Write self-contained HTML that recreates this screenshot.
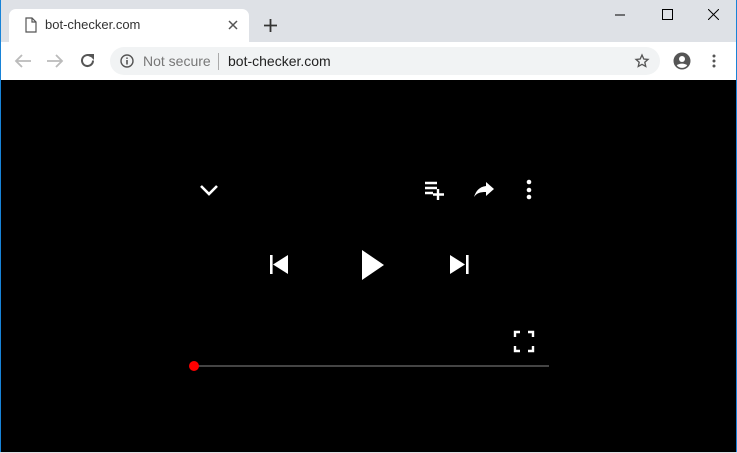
<!DOCTYPE html>
<html><head><style>
body{margin:0;width:737px;height:453px;overflow:hidden;background:#dee1e6;font-family:"Liberation Sans",sans-serif;position:relative}
.abs{position:absolute}
</style></head><body>
<div class="abs" style="left:0;top:0;width:735px;height:451px;border:1px solid #1883d7;border-top:none"></div>
<div class="abs" style="left:1px;top:0;width:735px;height:42px;background:#dee1e6"></div>
<div class="abs" style="left:9px;top:9px;width:240px;height:34px;background:#fff;border-radius:7px 7px 0 0"></div>
<svg class="abs" style="left:24px;top:17px" width="14" height="16" viewBox="0 0 14 16"><path d="M2 1h6l4 4v10H2z M8 1v4h4" fill="none" stroke="#555" stroke-width="1.2"/></svg>
<div class="abs" style="left:45px;top:17px;font-size:13px;color:#333">bot-checker.com</div>
<svg class="abs" style="left:228px;top:20px" width="10" height="10"><path d="M1 1L9 9M9 1L1 9" stroke="#555" stroke-width="1.5"/></svg>
<svg class="abs" style="left:264px;top:19px" width="13" height="13"><path d="M6.5 0v13M0 6.5h13" stroke="#333" stroke-width="1.8"/></svg>
<svg class="abs" style="left:615px;top:14px" width="10" height="2"><path d="M0 1h10" stroke="#000"/></svg>
<svg class="abs" style="left:662px;top:9px" width="11" height="11"><rect x=".5" y=".5" width="10" height="10" fill="none" stroke="#000"/></svg>
<svg class="abs" style="left:708px;top:9px" width="11" height="11"><path d="M0 0L11 11M11 0L0 11" stroke="#000"/></svg>
<div class="abs" style="left:1px;top:42px;width:735px;height:38px;background:#fff"></div>
<svg class="abs" style="left:14px;top:53px" width="18" height="16"><path d="M17 8H2M8 2L2 8l6 6" fill="none" stroke="#bbb" stroke-width="1.8"/></svg>
<svg class="abs" style="left:46px;top:53px" width="18" height="16"><path d="M1 8h15M10 2l6 6-6 6" fill="none" stroke="#bbb" stroke-width="1.8"/></svg>
<svg class="abs" style="left:79px;top:52px" width="17" height="17" viewBox="0 0 17 17"><path d="M14 8.5A5.5 5.5 0 1 1 12 4.3" fill="none" stroke="#555" stroke-width="2"/><path d="M9 2h6v6z" fill="#555"/></svg>
<div class="abs" style="left:110px;top:47px;width:550px;height:28px;background:#f1f3f4;border-radius:14px"></div>
<svg class="abs" style="left:120px;top:54px" width="14" height="14"><circle cx="7" cy="7" r="6" fill="none" stroke="#555" stroke-width="1.4"/><path d="M7 6v4.5M7 3.5v1.4" stroke="#555" stroke-width="1.6"/></svg>
<div class="abs" style="left:143px;top:53px;font-size:14px;color:#777">Not secure</div>
<div class="abs" style="left:218px;top:53px;width:1px;height:17px;background:#aaa"></div>
<div class="abs" style="left:228px;top:53px;font-size:14px;color:#222">bot-checker.com</div>
<svg class="abs" style="left:634px;top:53px" width="16" height="16" viewBox="0 0 24 24"><path d="M12 3l2.7 6 6.3.6-4.8 4.3 1.4 6.3L12 17l-5.6 3.2 1.4-6.3L3 9.6 9.3 9z" fill="none" stroke="#555" stroke-width="2"/></svg>
<svg class="abs" style="left:673px;top:52px" width="18" height="18" viewBox="0 0 18 18"><circle cx="9" cy="9" r="8.5" fill="#555"/><circle cx="9" cy="7" r="3" fill="#fff"/><path d="M3.8 13.5c2-2.5 8.4-2.5 10.4 0A7 7 0 0 1 3.8 13.5z" fill="#fff"/></svg>
<svg class="abs" style="left:712px;top:54px" width="4" height="14"><circle cx="2" cy="2" r="1.5" fill="#555"/><circle cx="2" cy="7" r="1.5" fill="#555"/><circle cx="2" cy="12" r="1.5" fill="#555"/></svg>
<div class="abs" style="left:1px;top:80px;width:735px;height:372px;background:#000"></div>
<svg class="abs" style="left:0;top:0" width="737" height="453">
<path d="M201 186l8 8 8-8" fill="none" stroke="#fff" stroke-width="2.6"/>
<path d="M425 183h12M425 188h12M425 193h8M438 189v11M433 194.5h11" stroke="#fff" stroke-width="2.4"/>
<path d="M494 189l-8-7v4c-7 1-10 5-12 11 3-4 6-5 12-5v4z" fill="#fff"/>
<circle cx="529" cy="182" r="2.3" fill="#fff"/><circle cx="529" cy="190" r="2.3" fill="#fff"/><circle cx="529" cy="197" r="2.3" fill="#fff"/>
<rect x="270" y="255" width="2.6" height="19" fill="#fff"/><path d="M288 255v19l-15-9.5z" fill="#fff"/>
<path d="M362 250v30l22-15z" fill="#fff"/>
<rect x="466" y="255" width="2.6" height="19" fill="#fff"/><path d="M450 255v19l15-9.5z" fill="#fff"/>
<path d="M515 337v-5h5M528 332h5v5M533 346v5h-5M520 351h-5v-5" fill="none" stroke="#fff" stroke-width="2.4"/>
<rect x="194" y="365" width="355" height="2" fill="#444"/>
<circle cx="194" cy="366" r="5" fill="#f00"/>
</svg>
</body></html>
